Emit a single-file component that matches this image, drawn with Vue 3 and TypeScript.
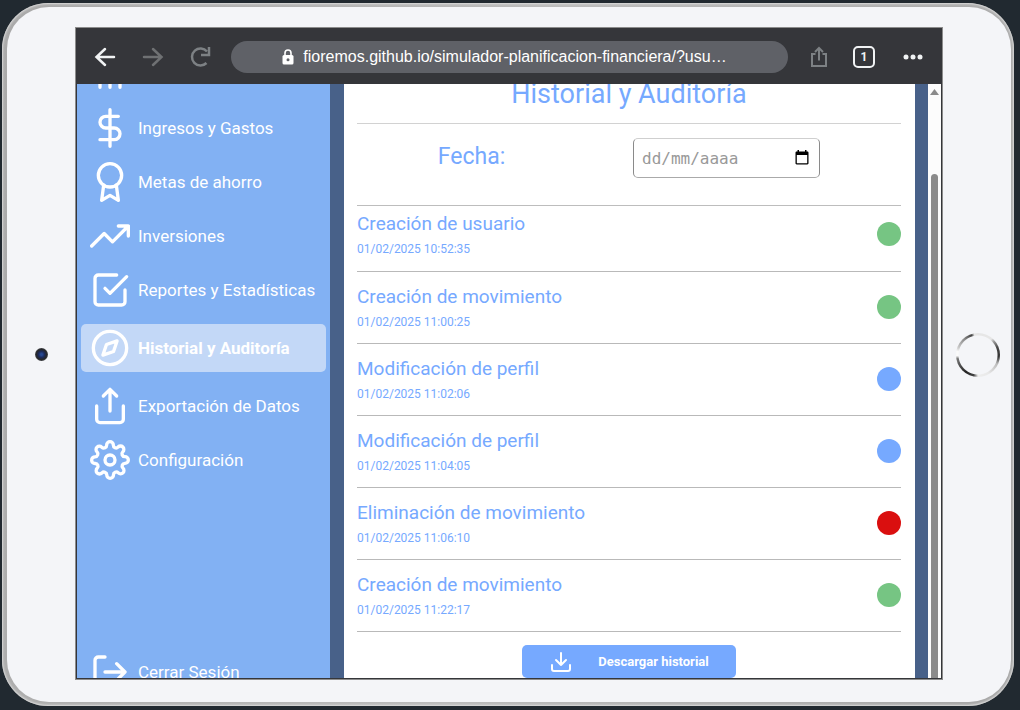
<script setup lang="ts">
import { ref } from 'vue'

interface MenuItem {
  label: string
  icon: string
}

interface HistoryEntry {
  title: string
  date: string
  kind: 'create' | 'edit' | 'remove'
}

const icons: Record<string, string> = {
  bars: '<path d="M12 20V10M18 20V4M6 20v-4"/>',
  dollar: '<path d="M12 1v22M17 5H9.500a3.500 3.500 0 0 0 0 7h5a3.500 3.500 0 0 1 0 7H6"/>',
  award: '<circle cx="12" cy="8" r="7"/><path d="M8.210 13.890 7 23l5-3 5 3-1.210-9.120"/>',
  trend: '<path d="M23 6l-9.500 9.500-5-5L1 18M17 6h6v6"/>',
  check: '<path d="M9 11l3 3L22 4M21 12v7a2 2 0 0 1-2 2H5a2 2 0 0 1-2-2V5a2 2 0 0 1 2-2h11"/>',
  compass: '<circle cx="12" cy="12" r="10"/><path d="M16.240 7.760l-2.120 6.360-6.360 2.120 2.120-6.360z"/>',
  share: '<path d="M4 12v8a2 2 0 0 0 2 2h12a2 2 0 0 0 2-2v-8M16 6l-4-4-4 4M12 2v13"/>',
  gear: '<circle cx="12" cy="12" r="3"/><path d="M19.400 15a1.650 1.650 0 0 0 .33 1.820l.06.06a2 2 0 0 1 0 2.830 2 2 0 0 1-2.830 0l-.06-.06a1.650 1.650 0 0 0-1.820-.33 1.650 1.650 0 0 0-1 1.510V21a2 2 0 0 1-2 2 2 2 0 0 1-2-2v-.09A1.650 1.650 0 0 0 9 19.400a1.650 1.650 0 0 0-1.820.33l-.06.06a2 2 0 0 1-2.830 0 2 2 0 0 1 0-2.830l.06-.06a1.650 1.650 0 0 0 .33-1.820 1.650 1.650 0 0 0-1.510-1H3a2 2 0 0 1-2-2 2 2 0 0 1 2-2h.09A1.650 1.650 0 0 0 4.600 9a1.650 1.650 0 0 0-.33-1.820l-.06-.06a2 2 0 0 1 0-2.830 2 2 0 0 1 2.830 0l.06.06a1.650 1.650 0 0 0 1.820.33H9a1.650 1.650 0 0 0 1-1.510V3a2 2 0 0 1 2-2 2 2 0 0 1 2 2v.09a1.650 1.650 0 0 0 1 1.510 1.650 1.650 0 0 0 1.820-.33l.06-.06a2 2 0 0 1 2.830 0 2 2 0 0 1 0 2.830l-.06.06a1.650 1.650 0 0 0-.33 1.820V9a1.650 1.650 0 0 0 1.510 1H21a2 2 0 0 1 2 2 2 2 0 0 1-2 2h-.09a1.650 1.650 0 0 0-1.510 1z"/>',
  logout: '<path d="M9 21H5a2 2 0 0 1-2-2V5a2 2 0 0 1 2-2h4M16 17l5-5-5-5M21 12H9"/>',
}

const menu: MenuItem[] = [
  { label: 'Ingresos y Gastos', icon: 'dollar' },
  { label: 'Metas de ahorro', icon: 'award' },
  { label: 'Inversiones', icon: 'trend' },
  { label: 'Reportes y Estadísticas', icon: 'check' },
  { label: 'Historial y Auditoría', icon: 'compass' },
  { label: 'Exportación de Datos', icon: 'share' },
  { label: 'Configuración', icon: 'gear' },
]

const entries: HistoryEntry[] = [
  { title: 'Creación de usuario', date: '01/02/2025 10:52:35', kind: 'create' },
  { title: 'Creación de movimiento', date: '01/02/2025 11:00:25', kind: 'create' },
  { title: 'Modificación de perfil', date: '01/02/2025 11:02:06', kind: 'edit' },
  { title: 'Modificación de perfil', date: '01/02/2025 11:04:05', kind: 'edit' },
  { title: 'Eliminación de movimiento', date: '01/02/2025 11:06:10', kind: 'remove' },
  { title: 'Creación de movimiento', date: '01/02/2025 11:22:17', kind: 'create' },
]

const active = ref('Historial y Auditoría')
const date = ref('')
</script>

<template>
  <div class="stage">
    <div class="device">
      <div class="face">
        <div class="bezel"><span class="camera"></span></div>

        <div class="screen">
          <header class="toolbar">
            <button class="tool" aria-label="Atrás">
              <svg width="24" height="24" viewBox="0 0 24 24" fill="none" stroke="#f1f3f4" stroke-width="2.500" stroke-linecap="round"><path d="M21 12H4M12 4l-8.500 8 8.500 8" /></svg>
            </button>
            <button class="tool" aria-label="Adelante">
              <svg width="24" height="24" viewBox="0 0 24 24" fill="none" stroke="#6f7173" stroke-width="2.500" stroke-linecap="round"><path d="M3 12h17M12 4l8.500 8-8.500 8" /></svg>
            </button>
            <button class="tool" aria-label="Recargar">
              <svg width="24" height="24" viewBox="0 0 24 24" fill="none" stroke="#7d8184" stroke-width="2.500"><path d="M17.500 18A8.500 8.500 0 1 1 18 6.500" /><path d="M20 2v8h-8" /></svg>
            </button>
            <button class="address">
              <svg width="12" height="16" viewBox="0 0 12 16"><rect x="0.500" y="6" width="11" height="9.500" rx="1.500" fill="#fff" /><path d="M3 6.500V4a3 3 0 0 1 6 0v2.500" fill="none" stroke="#fff" stroke-width="1.600" /><circle cx="6" cy="10.700" r="1.500" fill="#5f6167" /></svg>
              <span>fioremos.github.io/simulador-planificacion-financiera/?usu…</span>
            </button>
            <button class="tool" aria-label="Compartir">
              <svg width="24" height="24" viewBox="0 0 24 24" fill="none" stroke="#7d8184" stroke-width="2"><path d="M8.500 9H5v12h14V9h-3.500M12 15.500V3M8 7l4-4 4 4" /></svg>
            </button>
            <button class="tabs" aria-label="Pestañas">1</button>
            <button class="tool" aria-label="Más">
              <svg width="24" height="24" viewBox="0 0 24 24" fill="#f1f3f4"><circle cx="5" cy="12" r="2.500" /><circle cx="12" cy="12" r="2.500" /><circle cx="19" cy="12" r="2.500" /></svg>
            </button>
          </header>

          <div class="viewport">
            <aside class="sidebar">
              <nav>
                <a href="#" class="item" aria-label="Inicio" @click.prevent>
                  <svg class="glyph" viewBox="0 0 24 24" v-html="icons.bars"></svg>
                </a>
                <a
                  v-for="item in menu"
                  :key="item.label"
                  href="#"
                  class="item"
                  :class="{ active: item.label === active }"
                  @click.prevent="active = item.label"
                >
                  <svg class="glyph" viewBox="0 0 24 24" v-html="icons[item.icon]"></svg>
                  <span>{{ item.label }}</span>
                </a>
              </nav>
              <a href="#" class="item logout" @click.prevent>
                <svg class="glyph" viewBox="0 0 24 24" v-html="icons.logout"></svg>
                <span>Cerrar Sesión</span>
              </a>
            </aside>

            <main class="page">
              <h1>Historial y Auditoría</h1>
              <div class="filter">
                <label for="fecha">Fecha:</label>
                <div class="date-box">
                  <input id="fecha" v-model="date" type="text" placeholder="dd/mm/aaaa" />
                  <button aria-label="Abrir calendario">
                    <svg width="14" height="16" viewBox="0 0 14 16"><path d="M2.500 0H4v1.500h6V0h1.500v1.500h.8c.7 0 1.200.5 1.200 1.200v10.600c0 .7-.5 1.200-1.200 1.200H1.700c-.7 0-1.200-.5-1.200-1.200V2.700c0-.7.5-1.200 1.200-1.200h.8zM1.800 5v8.200h10.400V5z" fill="#000" fill-rule="evenodd" /></svg>
                  </button>
                </div>
              </div>
              <ul class="history">
                <li v-for="entry in entries" :key="entry.date">
                  <div>
                    <h2>{{ entry.title }}</h2>
                    <time>{{ entry.date }}</time>
                  </div>
                  <span class="dot" :class="entry.kind"></span>
                </li>
              </ul>
              <button class="download">
                <svg width="24" height="24" viewBox="0 0 24 24" fill="none" stroke="#fff" stroke-width="2" stroke-linecap="round" stroke-linejoin="round"><path d="M3 15v4a2 2 0 0 0 2 2h14a2 2 0 0 0 2-2v-4M7 10l5 5 5-5M12 15V3" /></svg>
                <span>Descargar historial</span>
              </button>
            </main>

            <div class="scrollbar">
              <svg width="9" height="6" viewBox="0 0 9 6"><path d="M4.500 0 9 6H0z" fill="#8b8b8b" /></svg>
              <span class="thumb"></span>
            </div>
          </div>
        </div>

        <div class="bezel right"><button class="home" aria-label="Inicio"></button></div>
      </div>
    </div>
  </div>
</template>

<style>
html,
body {
  margin: 0;
  background: #212930;
}
</style>

<style scoped>
* {
  box-sizing: border-box;
}

button {
  border: 0;
  padding: 0;
  background: none;
  font: inherit;
  cursor: pointer;
}

svg {
  display: block;
  flex: none;
}

.stage {
  height: 100vh;
  min-height: 480px;
  padding: 3px 6px 4px 2px;
  overflow: hidden;
  font-family: Roboto, "Liberation Sans", sans-serif;
}

.device {
  height: 100%;
  padding: 4px 3px 4px 5px;
  border-radius: 46px;
  background: linear-gradient(100deg, #a9a9a9, #bcbcbc 50%, #a6a6a6);
  box-shadow: inset 0 0 2px 1px #dcdcdc;
}

.face {
  display: flex;
  height: 100%;
  padding: 20px 0 22px;
  border-radius: 42px;
  background: #f4f5f8;
}

.bezel {
  display: flex;
  flex: none;
  width: 68px;
  align-items: center;
  justify-content: center;
  padding-top: 2px;
}

.bezel.right {
  padding-left: 2px;
}

.camera {
  width: 13px;
  height: 13px;
  border-radius: 50%;
  background: radial-gradient(circle, #26478f 0 1px, #1b2a5c 3px, #25272b 5px, #4b4d50 7px);
}

.home {
  width: 44px;
  height: 44px;
  border-radius: 50%;
  background:
    radial-gradient(circle, #f4f5f8 0 19px, transparent 20px),
    conic-gradient(#e6e6e6 0deg 40deg, #999 50deg, #444 70deg, #333 95deg, #bbb 115deg, #e8e8e8 150deg, #eee 180deg, #444 192deg, #222 215deg, #777 260deg, #fafafa 268deg 280deg, #ccc 290deg, #888 320deg, #444 342deg, #e6e6e6 350deg);
}

.screen {
  display: flex;
  flex: 1;
  flex-direction: column;
  min-width: 0;
  border: 1px solid #8c8c8c;
  background: #35363a;
  padding: 0 1px 1px;
}

.toolbar {
  display: flex;
  flex: none;
  height: 56px;
  align-items: center;
  gap: 24px;
  padding: 2px 16px 0;
}

.tool {
  flex: none;
}

.address {
  display: flex;
  flex: 1;
  min-width: 0;
  height: 32px;
  margin: 0 -5px 0 -6px;
  align-items: center;
  justify-content: center;
  gap: 9px;
  padding-right: 10px;
  border-radius: 16px;
  background: #5f6167;
  color: #fff;
  font-family: "Liberation Sans", Arial, sans-serif;
  font-size: 16px;
}

.address span {
  overflow: hidden;
  white-space: nowrap;
}

.tabs {
  flex: none;
  width: 22px;
  height: 22px;
  margin: 0 2px 0 -2px;
  border: 2px solid #f1f3f4;
  border-radius: 5px;
  color: #f1f3f4;
  font-size: 12px;
  font-weight: 700;
  line-height: 18px;
  text-align: center;
}

.viewport {
  display: flex;
  flex: 1;
  min-height: 0;
  overflow: hidden;
  background: #486189;
}

.sidebar {
  display: flex;
  flex: none;
  flex-direction: column;
  justify-content: space-between;
  width: 253px;
  margin: -34px 0 -18px;
  padding: 0 4px;
  background: #82b1f3;
}

nav {
  display: flex;
  flex-direction: column;
  gap: 6px;
}

.item {
  display: flex;
  height: 48px;
  align-items: center;
  gap: 8px;
  padding-left: 9px;
  border-radius: 5px;
  color: #fff;
  font-size: 17px;
  text-decoration: none;
  white-space: nowrap;
}

.item.active {
  margin: 4px 0;
  background: #c3d8f7;
  font-weight: 700;
}

.glyph {
  width: 40px;
  height: 40px;
  fill: none;
  stroke: #fff;
  stroke-width: 2;
  stroke-linecap: round;
  stroke-linejoin: round;
}

.page {
  display: flex;
  flex: 1;
  flex-direction: column;
  align-items: stretch;
  min-width: 0;
  margin: 0 13px 0 14px;
  padding: 0 14px 0 13px;
  background: #fff;
  color: #76a9ff;
}

h1 {
  flex: none;
  margin: -10px 0 0;
  padding-bottom: 9px;
  border-bottom: 1px solid #d2d2d2;
  font-size: 27px;
  font-weight: 400;
  line-height: 40px;
  text-align: center;
}

.filter {
  display: grid;
  flex: none;
  grid-template-columns: 229px 1fr;
  height: 82px;
  padding-top: 14px;
  border-bottom: 1px solid #bdbdbd;
  font-size: 23px;
}

.filter label {
  line-height: 38px;
  text-align: center;
}

.date-box {
  display: flex;
  width: 187px;
  height: 40px;
  margin-left: 47px;
  align-items: center;
  padding: 0 10px 0 8px;
  border: 1px solid #8a8a8a;
  border-top-color: #cfcfcf;
  border-bottom-color: #aaa;
  border-radius: 5px;
}

.date-box input {
  flex: 1;
  min-width: 0;
  border: 0;
  padding: 0;
  outline: 0;
  background: none;
  color: #555;
  font-family: "DejaVu Sans Mono", monospace;
  font-size: 16px;
}

.date-box input::placeholder {
  color: #999;
  opacity: 1;
}

.history {
  flex: none;
  margin: 0;
  padding: 0;
  list-style: none;
}

.history li {
  display: flex;
  height: 72px;
  align-items: center;
  justify-content: space-between;
  border-bottom: 1px solid #b9b9b9;
}

.history li:first-child {
  height: 66px;
  padding-bottom: 8px;
}

h2 {
  margin: 0;
  font-size: 19px;
  font-weight: 400;
  line-height: 28px;
}

time {
  display: block;
  font-size: 12px;
  line-height: 22px;
}

.dot {
  width: 24px;
  height: 24px;
  margin-bottom: 2px;
  border-radius: 50%;
}

.create {
  background: #76c583;
}

.edit {
  background: #76a9ff;
}

.remove {
  background: #da0f0f;
}

.download {
  display: flex;
  flex: none;
  align-self: center;
  width: 214px;
  height: 33px;
  margin-top: 13px;
  align-items: center;
  justify-content: center;
  gap: 25px;
  border-radius: 5px;
  background: #76a9ff;
  color: #fff;
  font-size: 13px;
  font-weight: 700;
}

.scrollbar {
  display: flex;
  flex: none;
  flex-direction: column;
  width: 13px;
  align-items: center;
  gap: 79px;
  padding-top: 5px;
  background: #fcfcfc;
}

.thumb {
  flex: 1;
  width: 7px;
  border-radius: 4px 4px 0 0;
  background: #8b8b8b;
}
</style>
